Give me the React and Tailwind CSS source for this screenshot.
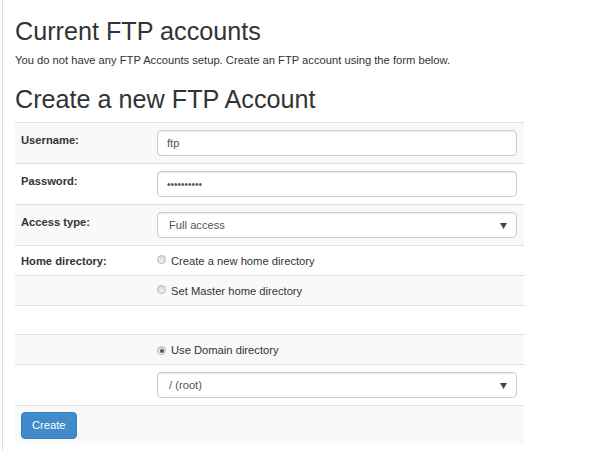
import { useState } from 'react';

const font = { fontFamily: '"Liberation Sans", Arial, sans-serif' };

function Radio({ checked }) {
  return (
    <span className="inline-flex items-center justify-center w-[9px] h-[9px] rounded-full border border-[#b5b5b5] bg-gradient-to-b from-[#d8d8d8] to-[#f4f4f4] mr-[5px] relative top-[-1px]">
      {checked && <span className="w-[4px] h-[4px] rounded-full bg-[#555]" />}
    </span>
  );
}

function SelectBox({ value }) {
  return (
    <div className="flex items-center justify-between h-[26px] w-[360px] border border-[#ccc] rounded-[4px] bg-white shadow-[inset_0_1px_1px_rgba(0,0,0,0.075)] pl-[11px] pr-[9px] text-[11.2px] text-[#555]">
      <span>{value}</span>
      <svg width="7" height="7" viewBox="0 0 7 7"><path d="M0 1h7L3.5 7z" fill="#444" /></svg>
    </div>
  );
}

export default function App() {
  const [username] = useState('ftp');

  const inputCls = 'h-[26px] w-[360px] border border-[#ccc] rounded-[4px] bg-white shadow-[inset_0_1px_1px_rgba(0,0,0,0.075)] px-[9px] flex items-center text-[11.2px] text-[#555]';

  return (
    <div style={font} className="min-h-[450px] ml-[2px] border-l border-[#dcdcdc] pl-[12px] text-[#333]">
      <h1 className="text-[25.2px] leading-[30px] pt-[16px]">Current FTP accounts</h1>
      <p className="text-[11.2px] leading-[16px] mt-[6px]">
        You do not have any FTP Accounts setup. Create an FTP account using the form below.
      </p>
      <h2 className="text-[25.2px] leading-[30px] mt-[16px]">Create a new FTP Account</h2>

      <table className="mt-[8px] w-[509px] border-collapse text-[11.2px]">
        <tbody>
          <tr className="bg-[#f9f9f9] border-t border-[#ddd]">
            <td className="w-[135px] px-[6px] py-[7px] align-top font-bold leading-[16px] pt-[9px]">Username:</td>
            <td className="px-[7px] py-[7px]"><div className={inputCls}>{username}</div></td>
          </tr>
          <tr className="border-t border-[#ddd]">
            <td className="px-[6px] py-[7px] align-top font-bold leading-[16px] pt-[9px]">Password:</td>
            <td className="px-[7px] py-[7px]"><div className={inputCls}><span className="text-[10px]">••••••••••</span></div></td>
          </tr>
          <tr className="bg-[#f9f9f9] border-t border-[#ddd]">
            <td className="px-[6px] py-[7px] align-top font-bold leading-[16px] pt-[9px]">Access type:</td>
            <td className="px-[7px] py-[7px]"><SelectBox value="Full access" /></td>
          </tr>
          <tr className="border-t border-[#ddd]">
            <td className="px-[6px] h-[30px] font-bold leading-[16px]">Home directory:</td>
            <td className="px-[7px] h-[30px] leading-[16px]"><Radio />Create a new home directory</td>
          </tr>
          <tr className="bg-[#f9f9f9] border-t border-[#ddd]">
            <td className="px-[6px] h-[30px]"></td>
            <td className="px-[7px] h-[30px] leading-[16px]"><Radio />Set Master home directory</td>
          </tr>
          <tr className="border-t border-[#ddd]">
            <td className="h-[29px]"></td>
            <td className="h-[29px]"></td>
          </tr>
          <tr className="bg-[#f9f9f9] border-t border-[#ddd]">
            <td className="px-[6px] h-[30px]"></td>
            <td className="px-[7px] h-[30px] leading-[16px]"><Radio checked />Use Domain directory</td>
          </tr>
          <tr className="border-t border-[#ddd]">
            <td className="px-[6px] py-[7px]"></td>
            <td className="px-[7px] py-[7px]"><SelectBox value="/ (root)" /></td>
          </tr>
          <tr className="bg-[#f9f9f9] border-t border-[#ddd]">
            <td colSpan={2} className="px-[6px] pt-[6px] pb-[5px]">
              <button className="h-[27px] px-[10px] rounded-[4px] bg-[#428bca] border border-[#357ebd] text-white text-[11.2px]">
                Create
              </button>
            </td>
          </tr>
        </tbody>
      </table>
    </div>
  );
}
